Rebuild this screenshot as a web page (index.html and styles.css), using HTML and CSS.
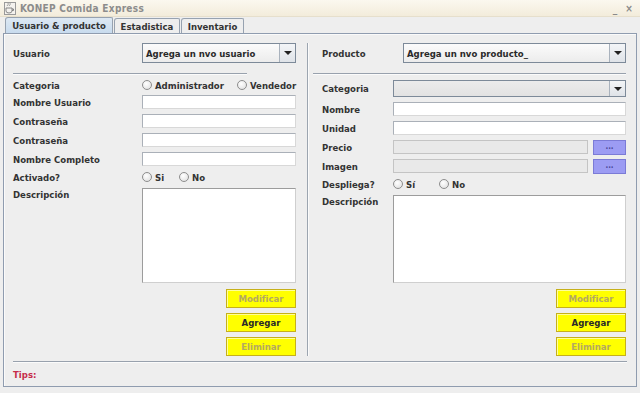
FILE: index.html
```html
<!DOCTYPE html>
<html lang="es">
<head>
    <meta charset="UTF-8">
    <title>KONEP Comida Express</title>
    <link rel="stylesheet" href="styles.css">
</head>
<body>
    <div class="window">
        <div class="titlebar">
            <svg class="titlebar_icon" width="12" height="13" viewBox="0 0 12 13">
                <rect x="0.5" y="0.5" width="11" height="12" fill="#f4f2ee" stroke="#9a9a9a"/>
                <path d="M3 4 q2 -2 1 -3 M5 4 q2 -2 1 -3" fill="none" stroke="#8a8a8a" stroke-width="0.8"/>
                <path d="M2 6 h6 v3 q0 2 -3 2 q-3 0 -3 -2 z M8 7 h1.5 v1.5 h-1.5" fill="none" stroke="#7a7a7a" stroke-width="0.9"/>
            </svg>
            <span class="titlebar_text">KONEP Comida Express</span>
            <span class="titlebar_ctl">_</span>
            <span class="titlebar_ctl">×</span>
        </div>

        <div class="frame">
            <div class="tabs">
                <div class="tab tab-active tab-1">Usuario &amp; producto</div>
                <div class="tab tab-2">Estadistica</div>
                <div class="tab tab-3">Inventario</div>
            </div>

            <div class="panel">
                <div class="columns">
                    <!-- usuario -->
                    <section class="col col-left">
                        <div class="row row-combo">
                            <span class="label">Usuario</span>
                            <div class="combo">
                                <span class="combo_text">Agrega un nvo usuario</span>
                                <span class="combo_btn"><i class="arrow"></i></span>
                            </div>
                        </div>
                        <div class="sep sep-short"></div>
                        <div class="row row-radio row-first">
                            <span class="label">Categoria</span>
                            <div class="radios">
                                <label class="radio radio-admin"><i class="radio_dot"></i>Administrador</label>
                                <label class="radio"><i class="radio_dot"></i>Vendedor</label>
                            </div>
                        </div>
                        <div class="row row-field row-tight">
                            <span class="label">Nombre Usuario</span>
                            <div class="field"></div>
                        </div>
                        <div class="row row-field">
                            <span class="label">Contraseña</span>
                            <div class="field"></div>
                        </div>
                        <div class="row row-field">
                            <span class="label">Contraseña</span>
                            <div class="field"></div>
                        </div>
                        <div class="row row-field">
                            <span class="label">Nombre Completo</span>
                            <div class="field"></div>
                        </div>
                        <div class="row row-radio">
                            <span class="label">Activado?</span>
                            <div class="radios">
                                <label class="radio radio-si"><i class="radio_dot"></i>Si</label>
                                <label class="radio"><i class="radio_dot"></i>No</label>
                            </div>
                        </div>
                        <div class="row row-area">
                            <span class="label label-top">Descripción</span>
                            <div class="area area-left"></div>
                        </div>
                        <div class="actions">
                            <button class="btn btn-off">Modificar</button>
                            <button class="btn">Agregar</button>
                            <button class="btn btn-off">Eliminar</button>
                        </div>
                    </section>

                    <div class="divider"></div>

                    <!-- producto -->
                    <section class="col col-right">
                        <div class="row row-combo row-combo-wide">
                            <span class="label">Producto</span>
                            <div class="combo">
                                <span class="combo_text">Agrega un nvo producto_</span>
                                <span class="combo_btn"><i class="arrow"></i></span>
                            </div>
                        </div>
                        <div class="sep"></div>
                        <div class="row row-cat">
                            <span class="label">Categoria</span>
                            <div class="combo combo-off">
                                <span class="combo_text"></span>
                                <span class="combo_btn"><i class="arrow"></i></span>
                            </div>
                        </div>
                        <div class="row row-field">
                            <span class="label">Nombre</span>
                            <div class="field"></div>
                        </div>
                        <div class="row row-field">
                            <span class="label">Unidad</span>
                            <div class="field"></div>
                        </div>
                        <div class="row row-field">
                            <span class="label">Precio</span>
                            <div class="field-pick">
                                <div class="field field-off"></div>
                                <span class="pick">...</span>
                            </div>
                        </div>
                        <div class="row row-field">
                            <span class="label">Imagen</span>
                            <div class="field-pick">
                                <div class="field field-off"></div>
                                <span class="pick">...</span>
                            </div>
                        </div>
                        <div class="row row-radio">
                            <span class="label">Despliega?</span>
                            <div class="radios">
                                <label class="radio radio-si2"><i class="radio_dot"></i>Sí</label>
                                <label class="radio"><i class="radio_dot"></i>No</label>
                            </div>
                        </div>
                        <div class="row row-area">
                            <span class="label label-top">Descripción</span>
                            <div class="area area-right"></div>
                        </div>
                        <div class="actions">
                            <button class="btn btn-off">Modificar</button>
                            <button class="btn">Agregar</button>
                            <button class="btn btn-off">Eliminar</button>
                        </div>
                    </section>
                </div>

                <div class="sep sep-bottom"></div>
                <div class="tips">Tips:</div>
            </div>
        </div>
    </div>
</body>
</html>
```

FILE: styles.css
```css
* {
    box-sizing: border-box;
}

html,
body {
    margin: 0;
    padding: 0;
}

body {
    width: 640px;
    height: 393px;
    overflow: hidden;
    font-family: "DejaVu Sans Condensed", "DejaVu Sans", sans-serif;
    font-stretch: condensed;
    font-weight: bold;
    font-size: 9.5px;
    color: #333;
    background-color: #e2e2e2;
}

.window {
    width: 640px;
    height: 393px;
    display: flex;
    flex-direction: column;
    background-color: #eeeeee;
}

/* title bar */
.titlebar {
    height: 17px;
    display: flex;
    align-items: center;
    gap: 4px;
    padding: 0 6px 0 4px;
    background: linear-gradient(#fbf8ef, #f3ecdb);
    border-bottom: 1px solid #e6dfcc;
}

.titlebar_text {
    flex: 1;
    color: #8c8c8c;
    font-size: 10px;
    letter-spacing: 0.3px;
}

.titlebar_ctl {
    color: #8a8a8a;
    font-size: 10px;
    width: 10px;
    text-align: center;
}

/* frame + tabs */
.frame {
    flex: 1;
    display: flex;
    flex-direction: column;
    padding: 0 3px 6px;
}

.tabs {
    height: 16px;
    display: flex;
    align-items: flex-end;
    gap: 1px;
    padding-left: 2px;
}

.tab {
    height: 15px;
    display: flex;
    align-items: center;
    justify-content: center;
    border: 1px solid #97a2b0;
    border-bottom: none;
    border-radius: 3px 2px 0 0;
    background-color: #eeeeee;
    font-size: 9.5px;
}

.tab-active {
    height: 16px;
    background: linear-gradient(#dde8f3, #c8dbee);
}

.tab-1 {
    width: 108px;
}

.tab-2 {
    width: 66px;
}

.tab-3 {
    width: 63px;
}

.panel {
    flex: 1;
    display: flex;
    flex-direction: column;
    padding: 9px 10px 0 9px;
    border: 1px solid #8f9caf;
    box-shadow: inset 1px 1px #fafafa;
}

.columns {
    display: flex;
    align-items: stretch;
}

.col {
    display: flex;
    flex-direction: column;
}

.col-left {
    width: 283px;
}

.col-right {
    width: 313px;
}

.divider {
    width: 1px;
    margin: 0 5px 0 11px;
    background-color: #9ca5b0;
    box-shadow: 1px 0 #fbfbfb;
}

/* rows */
.row {
    display: grid;
    grid-template-columns: 129px 1fr;
    align-items: center;
}

.col-right .row {
    grid-template-columns: 71px 1fr;
    padding-left: 9px;
}

.col-right .row-combo-wide {
    grid-template-columns: 81px 1fr;
}

.row-combo {
    height: 20px;
}

.row-cat {
    height: 17px;
    margin-top: 5px;
}

.row-radio {
    height: 12px;
    margin-top: 5px;
}

.row-first {
    margin-top: 4px;
}

.row-field {
    height: 14px;
    margin-top: 5px;
}

.row-tight {
    margin-top: 4px;
}

.row-area {
    margin-top: 5px;
    align-items: start;
}

.label-top {
    margin-top: 1px;
}

.sep {
    height: 2px;
    margin-top: 10px;
    border-top: 1px solid #98a1ad;
    border-bottom: 1px solid #fbfbfb;
}

.sep-short {
    width: 234px;
}

.sep-bottom {
    margin-top: 5px;
    width: 614px;
}

/* controls */
.combo {
    height: 100%;
    display: flex;
    border: 1px solid #7d8a99;
    background: linear-gradient(#fbfbfb, #ececec);
}

.combo_text {
    flex: 1;
    padding-left: 3px;
    display: flex;
    align-items: center;
    font-size: 9.5px;
    color: #2a2a2a;
}

.combo-off {
    background: linear-gradient(#ececec, #e2e2e2);
}

.combo_btn {
    width: 16px;
    display: flex;
    align-items: center;
    justify-content: center;
    border-left: 1px solid #a9b2bd;
    background: linear-gradient(#f3f5f7, #dfe3e8);
}

.arrow {
    width: 0;
    height: 0;
    border-left: 4px solid transparent;
    border-right: 4px solid transparent;
    border-top: 4px solid #222;
}

.field {
    height: 14px;
    border: 1px solid #aab0b8;
    border-right-color: #d8d8d8;
    border-bottom-color: #d8d8d8;
    background-color: #fff;
}

.field-off {
    flex: 1;
    background-color: #e9e9e9;
    border-color: #c4c4c4;
}

.field-pick {
    display: flex;
    gap: 5px;
}

.pick {
    width: 33px;
    height: 15px;
    display: flex;
    align-items: flex-end;
    justify-content: center;
    padding-bottom: 3px;
    font-size: 8px;
    line-height: 1;
    color: #4a4a9a;
    background-color: #9c9cf3;
    border: 1px solid #7b7bd6;
}

.area {
    border: 1px solid #9c9c9c;
    border-right-color: #cfcfcf;
    border-bottom-color: #cfcfcf;
    background-color: #fff;
}

.area-left {
    height: 95px;
}

.area-right {
    height: 88px;
}

.radios {
    display: flex;
    align-items: center;
}

.radio {
    display: flex;
    align-items: center;
    gap: 3px;
    font-size: 9.5px;
}

.radio_dot {
    width: 10px;
    height: 10px;
    border-radius: 50%;
    border: 1px solid #8d8d8d;
    background: radial-gradient(circle at 40% 35%, #ffffff, #dcdcdc);
}

.radio-admin {
    width: 95px;
}

.radio-si {
    width: 37px;
}

.radio-si2 {
    width: 46px;
}

/* buttons */
.actions {
    display: flex;
    flex-direction: column;
    align-items: flex-end;
    gap: 5px;
    margin-top: 6px;
}

.btn {
    width: 70px;
    height: 19px;
    padding: 0;
    font: inherit;
    font-size: 9.5px;
    color: #2a2a2a;
    background-color: #ffff00;
    border: 1px solid #c6b01a;
    box-shadow: inset 1px 1px #ffff9a;
}

.btn-off {
    color: #b4a960;
}

.tips {
    margin-top: 6px;
    height: 12px;
    color: #c62d4a;
    font-size: 9.5px;
}
```
